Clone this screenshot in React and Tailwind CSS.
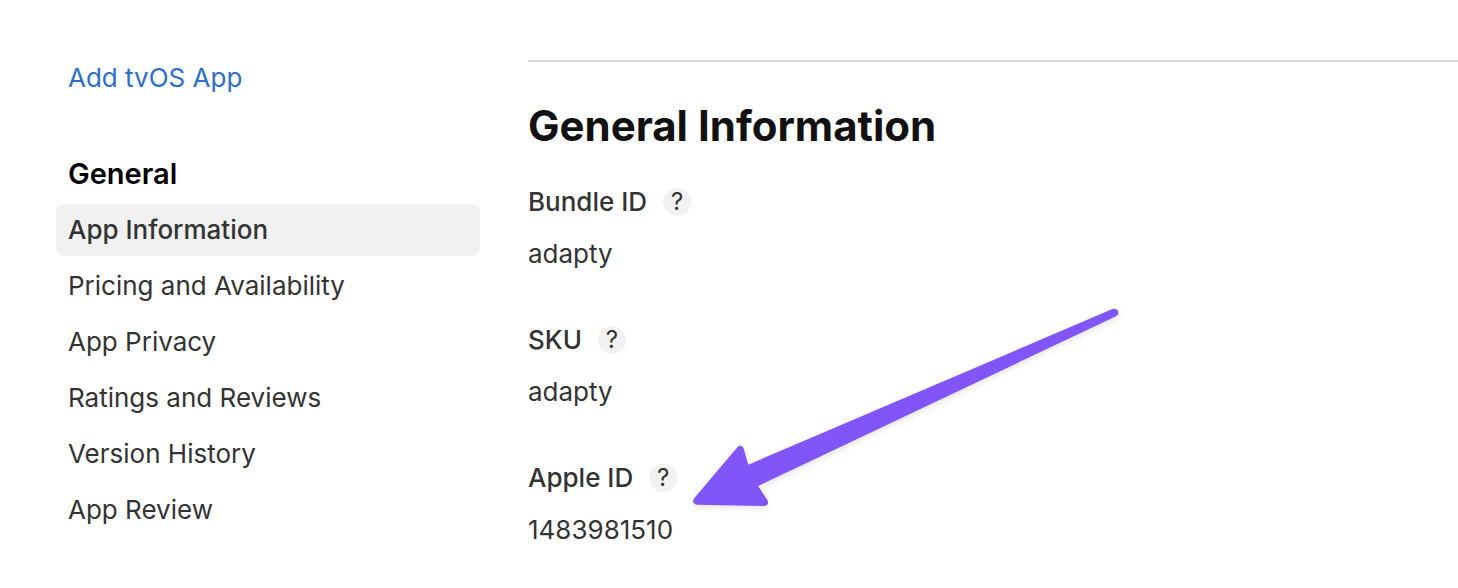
const links = ["App Information", "Pricing and Availability", "App Privacy", "Ratings and Reviews", "Version History", "App Review"];

const fields = [
  { label: "Bundle ID", value: "adapty" },
  { label: "SKU", value: "adapty" },
  { label: "Apple ID", value: "1483981510", arrow: true },
];

function Arrow() {
  return (
    <svg className="pointer-events-none absolute -bottom-5 left-full ml-4 h-[212px] w-[432px] overflow-visible drop-shadow-[0_2px_3px_rgba(0,0,0,0.12)]" viewBox="0 0 432 212" fill="none" aria-hidden="true">
      <path d="M419.5 9.1 C422 8.1 424.4 9.2 425.1 11.3 C425.8 13.3 425 15.2 423 16.2 L65 186 L74.2 199.8 C76.3 203 74.3 206.1 70.6 206 L4 204.7 C0.4 204.5 -1.2 201 1.2 198.2 L44.4 147.2 C46.6 144.7 49.9 145.5 50.7 148.8 L55.3 164.7 Z" fill="#8155f7" />
    </svg>
  );
}

function Field({ label, value, arrow }) {
  return (
    <div className="flex flex-col">
      <dt className="flex h-13 items-center gap-4 font-medium">
        {label}
        <span className="relative flex">
          <button type="button" aria-label={`About ${label}`} className="flex size-7 items-center justify-center rounded-full bg-[#f2f2f2] text-2xl font-normal">?</button>
          {arrow && <Arrow />}
        </span>
      </dt>
      <dd className="flex h-13 items-center">{value}</dd>
    </div>
  );
}

export default function App() {
  return (
    <div className="flex min-h-screen bg-white font-['Inter',sans-serif] text-[26px] leading-8 text-[#333333]">
      <aside className="w-[480px] shrink-0 pt-[62px] pl-14">
        <a href="#tvos" className="block px-3 text-[#2d6fc9]">Add tvOS App</a>
        <h2 className="mt-16 px-3 text-[29px] font-semibold text-black">General</h2>
        <nav className="mt-3.5 flex flex-col gap-1">
          {links.map((link, i) => (
            <a key={link} href="#section" aria-current={i === 0 ? "page" : undefined} className={`flex h-13 items-center rounded-lg px-3 ${i === 0 ? "bg-[#f1f1f1] font-medium" : ""}`}>{link}</a>
          ))}
        </nav>
      </aside>
      <main className="ml-12 min-w-0 flex-1 pt-[60px]">
        <hr className="border-t-2 border-[#d6d6d6]" />
        <h1 className="mt-10 text-[42px] leading-12 font-bold text-[#111112]">General Information</h1>
        <dl className="mt-[26px] flex flex-col gap-[34px]">
          {fields.map((field) => <Field key={field.label} {...field} />)}
        </dl>
      </main>
    </div>
  );
}
